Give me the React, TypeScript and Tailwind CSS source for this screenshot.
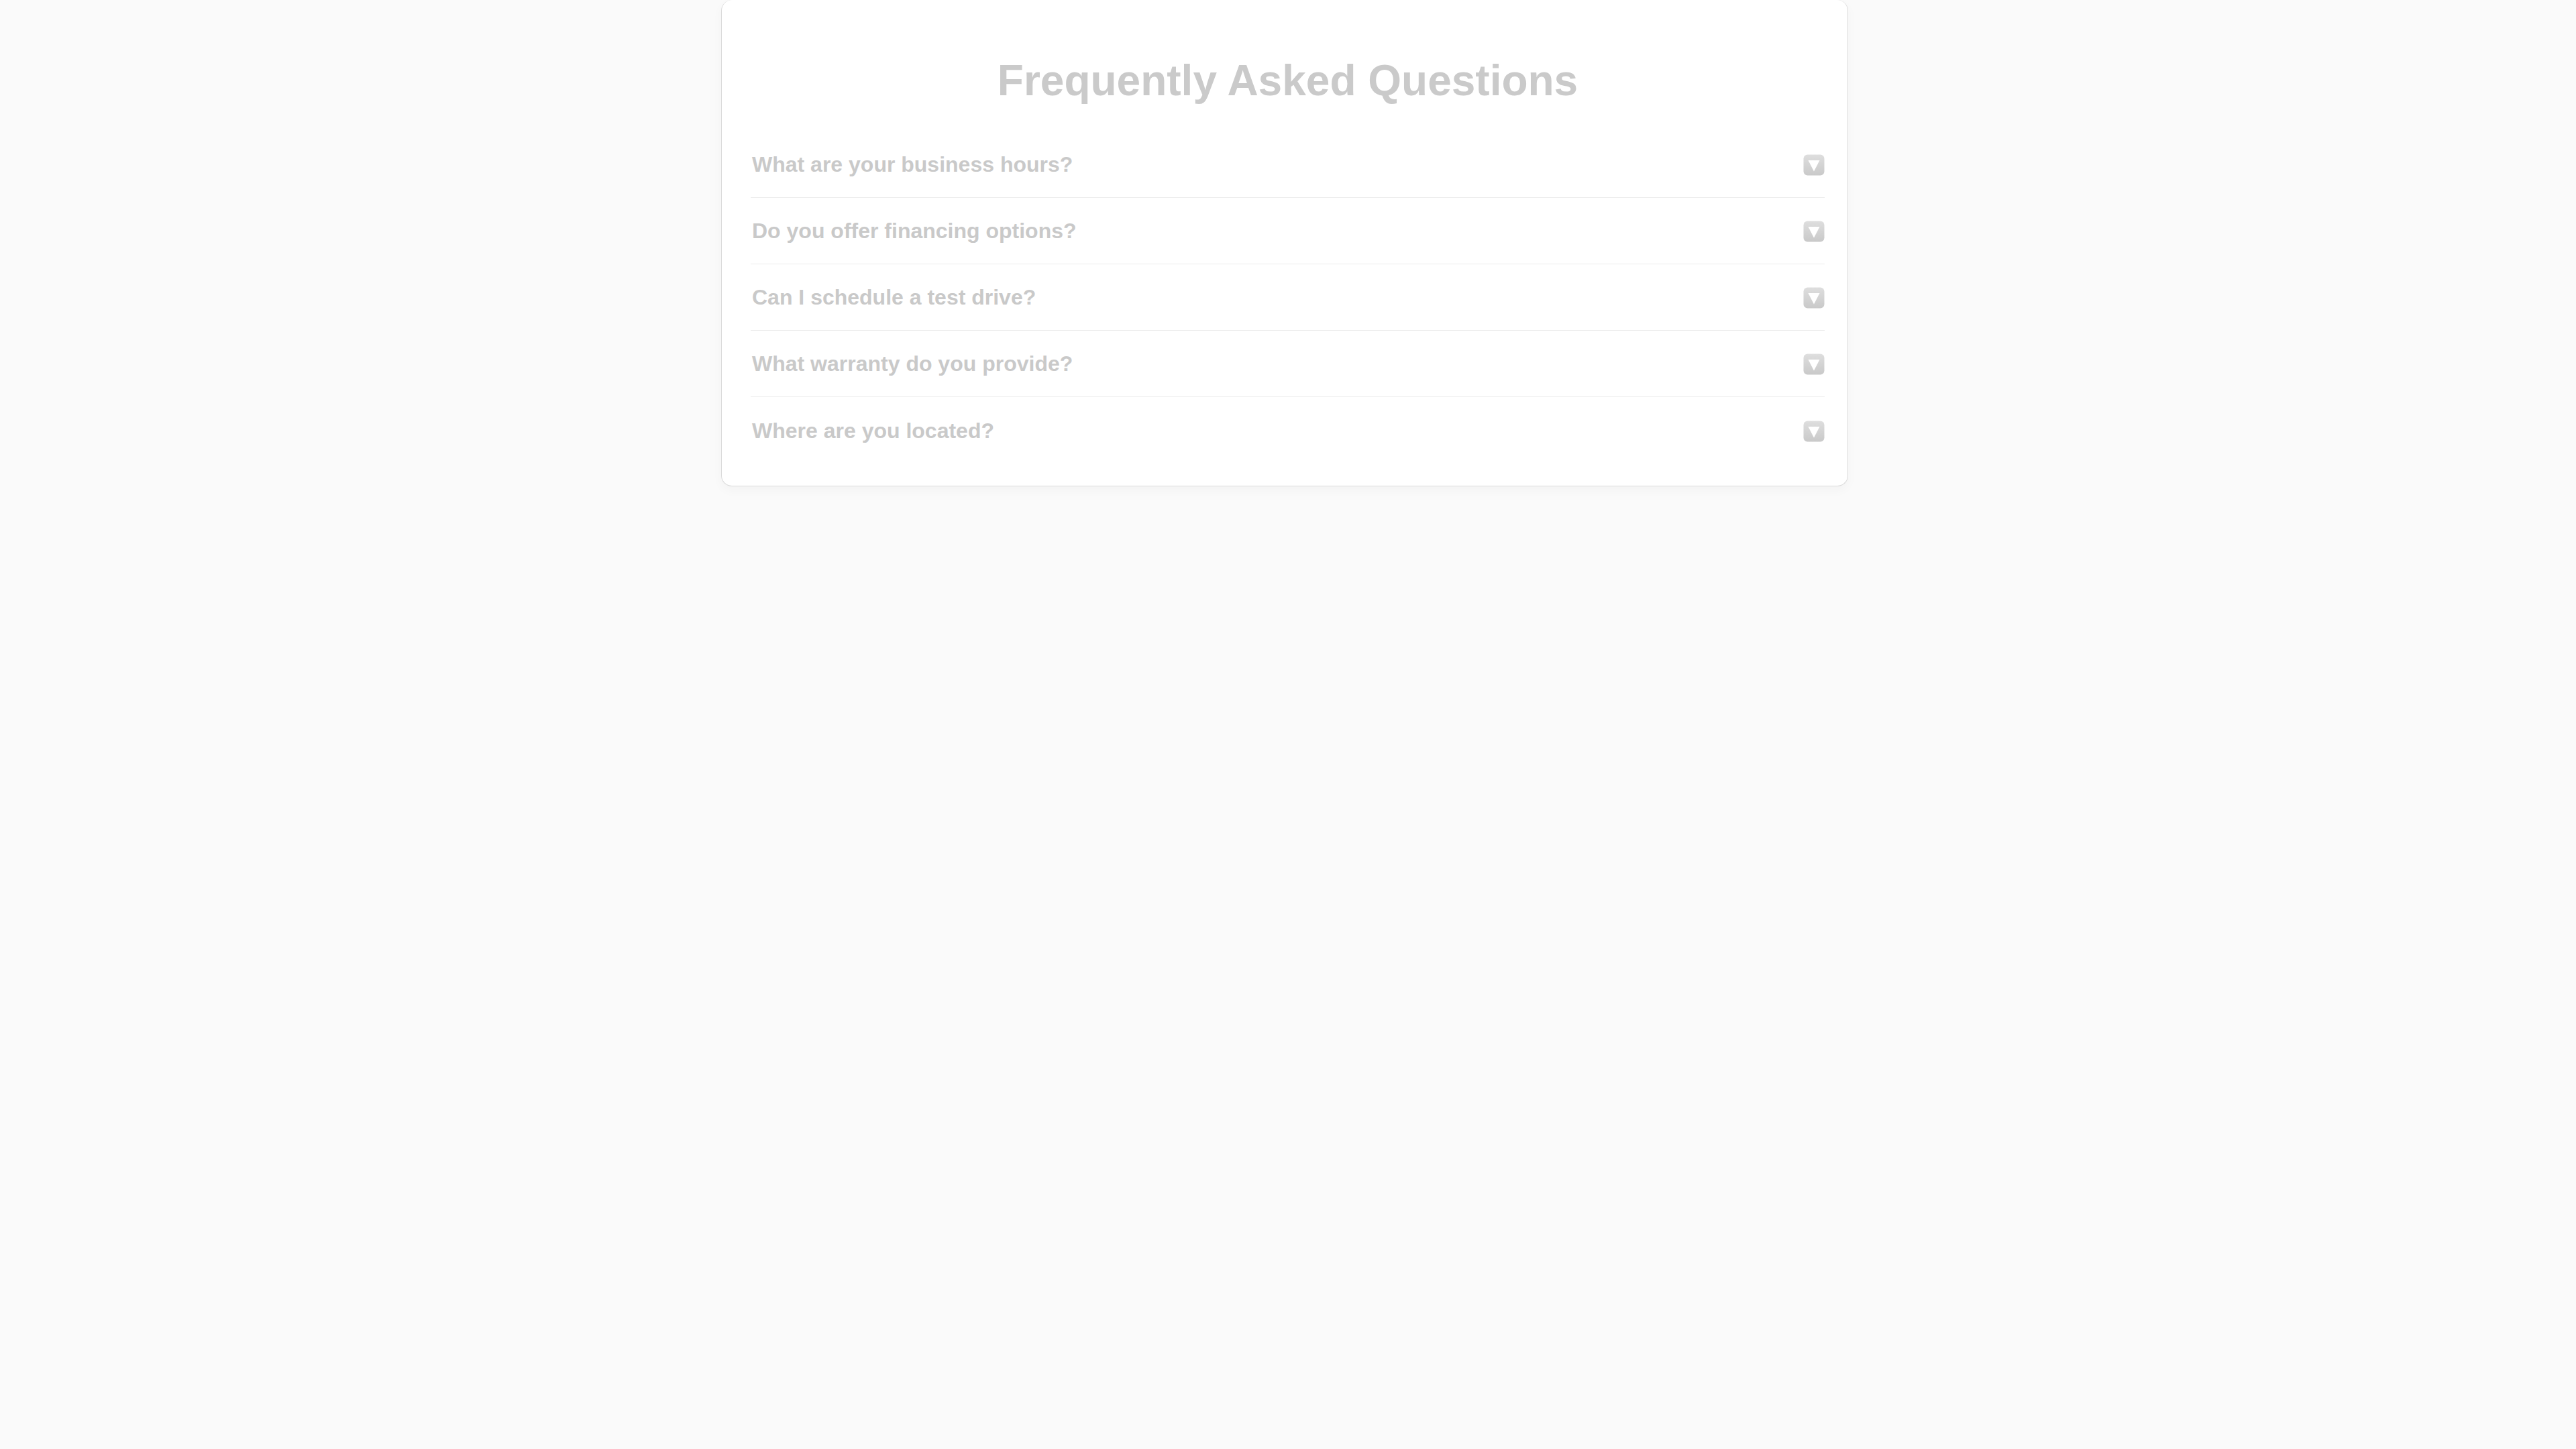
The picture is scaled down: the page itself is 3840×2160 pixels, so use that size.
import React from "react";

const questions = [
  "What are your business hours?",
  "Do you offer financing options?",
  "Can I schedule a test drive?",
  "What warranty do you provide?",
  "Where are you located?",
];

function DownIcon() {
  return (
    <svg width="32" height="32" viewBox="0 0 32 32" className="mt-[2px] shrink-0">
      <defs>
        <linearGradient id="g" x1="0" y1="0" x2="0" y2="1">
          <stop offset="0" stopColor="#dedede" />
          <stop offset="1" stopColor="#c9c9c9" />
        </linearGradient>
      </defs>
      <rect x="0.5" y="0.5" width="31" height="31" rx="6" fill="url(#g)" />
      <polygon points="7.5,9 24.5,9 16,25.5" fill="#ffffff" />
    </svg>
  );
}

export default function App() {
  return (
    <div
      className="min-h-screen w-full bg-[#fafafa]"
      style={{ fontFamily: '"Liberation Sans", Arial, sans-serif' }}
    >
      <div className="flex justify-center pr-[10px]">
        <div className="w-[1680px] rounded-2xl border border-t-0 border-[#dadada] bg-white pl-[43px] pr-[34px] pt-[88px] pb-[33px] shadow-[0_6px_16px_rgba(0,0,0,0.03)]">
          <h1 className="mb-[44px] text-center text-[64px] font-bold leading-none text-[#cacaca]">
            Frequently Asked Questions
          </h1>
          <div className="flex flex-col">
            {questions.map((q, i) => (
              <div
                key={q}
                className={
                  "flex h-[99px] items-center justify-between pl-[2px] " +
                  (i < questions.length - 1 ? "border-b border-[#ececec]" : "")
                }
              >
                <span className="text-[32px] font-bold leading-[48px] text-[#c9c9c9]">
                  {q}
                </span>
                <DownIcon />
              </div>
            ))}
          </div>
        </div>
      </div>
    </div>
  );
}
